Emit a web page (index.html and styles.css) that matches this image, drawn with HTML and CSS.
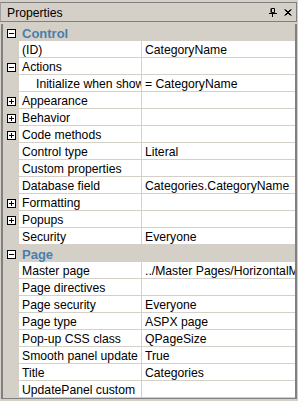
FILE: index.html
```html
<!DOCTYPE html>
<html lang="en">

<head>
    <meta charset="UTF-8">
    <title>Properties</title>
    <link rel="stylesheet" href="styles.css">
</head>

<body>

<div class="panel">
    <div class="titlebar">
        <span class="title">Properties</span>
        <svg class="pin" width="8" height="9" viewBox="0 0 8 9">
            <path d="M2.5 0.5h3v4h-3z M2 0.5v4 M0 5.5h8 M3.5 5.5v3.5" fill="none" stroke="#000" stroke-width="1"/>
        </svg>
        <svg class="close" width="8" height="7" viewBox="0 0 8 7">
            <path d="M0.5 0.5l6 6 M1.5 0.5l6 6 M6.5 0.5l-6 6 M7.5 0.5l-6 6" fill="none" stroke="#000" stroke-width="1"/>
        </svg>
    </div>

    <div class="grid">
        <div class="row cat"><span class="gut"><i class="box minus"></i></span><span class="catname">Control</span></div>
        <div class="row"><span class="gut"></span><span class="name">(ID)</span><span class="val">CategoryName</span></div>
        <div class="row"><span class="gut"><i class="box minus"></i></span><span class="name">Actions</span><span class="val"></span></div>
        <div class="row"><span class="gut"></span><span class="name sub">Initialize when show</span><span class="val">= CategoryName</span></div>
        <div class="row"><span class="gut"><i class="box plus"></i></span><span class="name">Appearance</span><span class="val"></span></div>
        <div class="row"><span class="gut"><i class="box plus"></i></span><span class="name">Behavior</span><span class="val"></span></div>
        <div class="row"><span class="gut"><i class="box plus"></i></span><span class="name">Code methods</span><span class="val"></span></div>
        <div class="row"><span class="gut"></span><span class="name">Control type</span><span class="val">Literal</span></div>
        <div class="row"><span class="gut"></span><span class="name">Custom properties</span><span class="val"></span></div>
        <div class="row"><span class="gut"></span><span class="name">Database field</span><span class="val">Categories.CategoryName</span></div>
        <div class="row"><span class="gut"><i class="box plus"></i></span><span class="name">Formatting</span><span class="val"></span></div>
        <div class="row"><span class="gut"><i class="box plus"></i></span><span class="name">Popups</span><span class="val"></span></div>
        <div class="row"><span class="gut"></span><span class="name">Security</span><span class="val">Everyone</span></div>
        <div class="row cat"><span class="gut"><i class="box minus"></i></span><span class="catname">Page</span></div>
        <div class="row"><span class="gut"></span><span class="name">Master page</span><span class="val">../Master Pages/HorizontalMenu</span></div>
        <div class="row"><span class="gut"></span><span class="name">Page directives</span><span class="val"></span></div>
        <div class="row"><span class="gut"></span><span class="name">Page security</span><span class="val">Everyone</span></div>
        <div class="row"><span class="gut"></span><span class="name">Page type</span><span class="val">ASPX page</span></div>
        <div class="row"><span class="gut"></span><span class="name">Pop-up CSS class</span><span class="val">QPageSize</span></div>
        <div class="row"><span class="gut"></span><span class="name">Smooth panel update</span><span class="val">True</span></div>
        <div class="row"><span class="gut"></span><span class="name">Title</span><span class="val">Categories</span></div>
        <div class="row"><span class="gut"></span><span class="name">UpdatePanel custom</span><span class="val"></span></div>
    </div>
</div>

</body>
</html>
```

FILE: styles.css
```css
body {
    margin: 0;
    padding: 0;
    background-color: #d4d0c8;
    font-family: "Liberation Sans", Arial, sans-serif;
    font-size: 12.2px;
    color: #000;
}

.panel {
    width: 298px;
    height: 401px;
    padding-top: 2px;
    box-sizing: border-box;
    overflow: hidden;
}

.titlebar {
    display: flex;
    align-items: center;
    height: 18px;
    margin-right: 1px;
    padding-left: 6px;
    border: 1px solid #808080;
    border-left-color: #a0a0a0;
}

.title {
    flex: 1;
    line-height: 18px;
    padding-top: 1px;
}

.pin {
    margin-right: 7px;
    margin-top: 1px;
}

.close {
    margin-right: 4px;
    margin-top: 1px;
}

.grid {
    margin: 2px 1px 0 1px;
    border-left: 2px solid #808080;
    border-right: 2px solid #808080;
    border-bottom: 1px solid #808080;
}

.row {
    display: grid;
    grid-template-columns: 16px 123px 1fr;
    height: 17px;
}

.gut {
    position: relative;
    background-color: #d4d0c8;
}

.name,
.val {
    padding-top: 3px;
    line-height: 13px;
    background-color: #fff;
    border-bottom: 1px solid #d4d0c8;
    white-space: nowrap;
    overflow: hidden;
}

.name {
    padding-left: 3px;
    border-right: 1px solid #d4d0c8;
}

.name.sub {
    padding-left: 17px;
}

.val {
    padding-left: 3px;
}

.cat {
    background-color: #d4d0c8;
}

.catname {
    grid-column: 2 / 4;
    padding-left: 3px;
    padding-top: 1px;
    font-size: 13px;
    font-weight: bold;
    color: #4a7eab;
    line-height: 17px;
}

.box {
    position: absolute;
    left: 4px;
    top: 5px;
    width: 7px;
    height: 7px;
    border: 1px solid #000;
    background-color: #fff;
}

.box::before,
.box::after {
    content: "";
    position: absolute;
    background-color: #000;
}

.box::before {
    left: 1px;
    top: 3px;
    width: 5px;
    height: 1px;
}

.box.plus::after {
    left: 3px;
    top: 1px;
    width: 1px;
    height: 5px;
}
```
